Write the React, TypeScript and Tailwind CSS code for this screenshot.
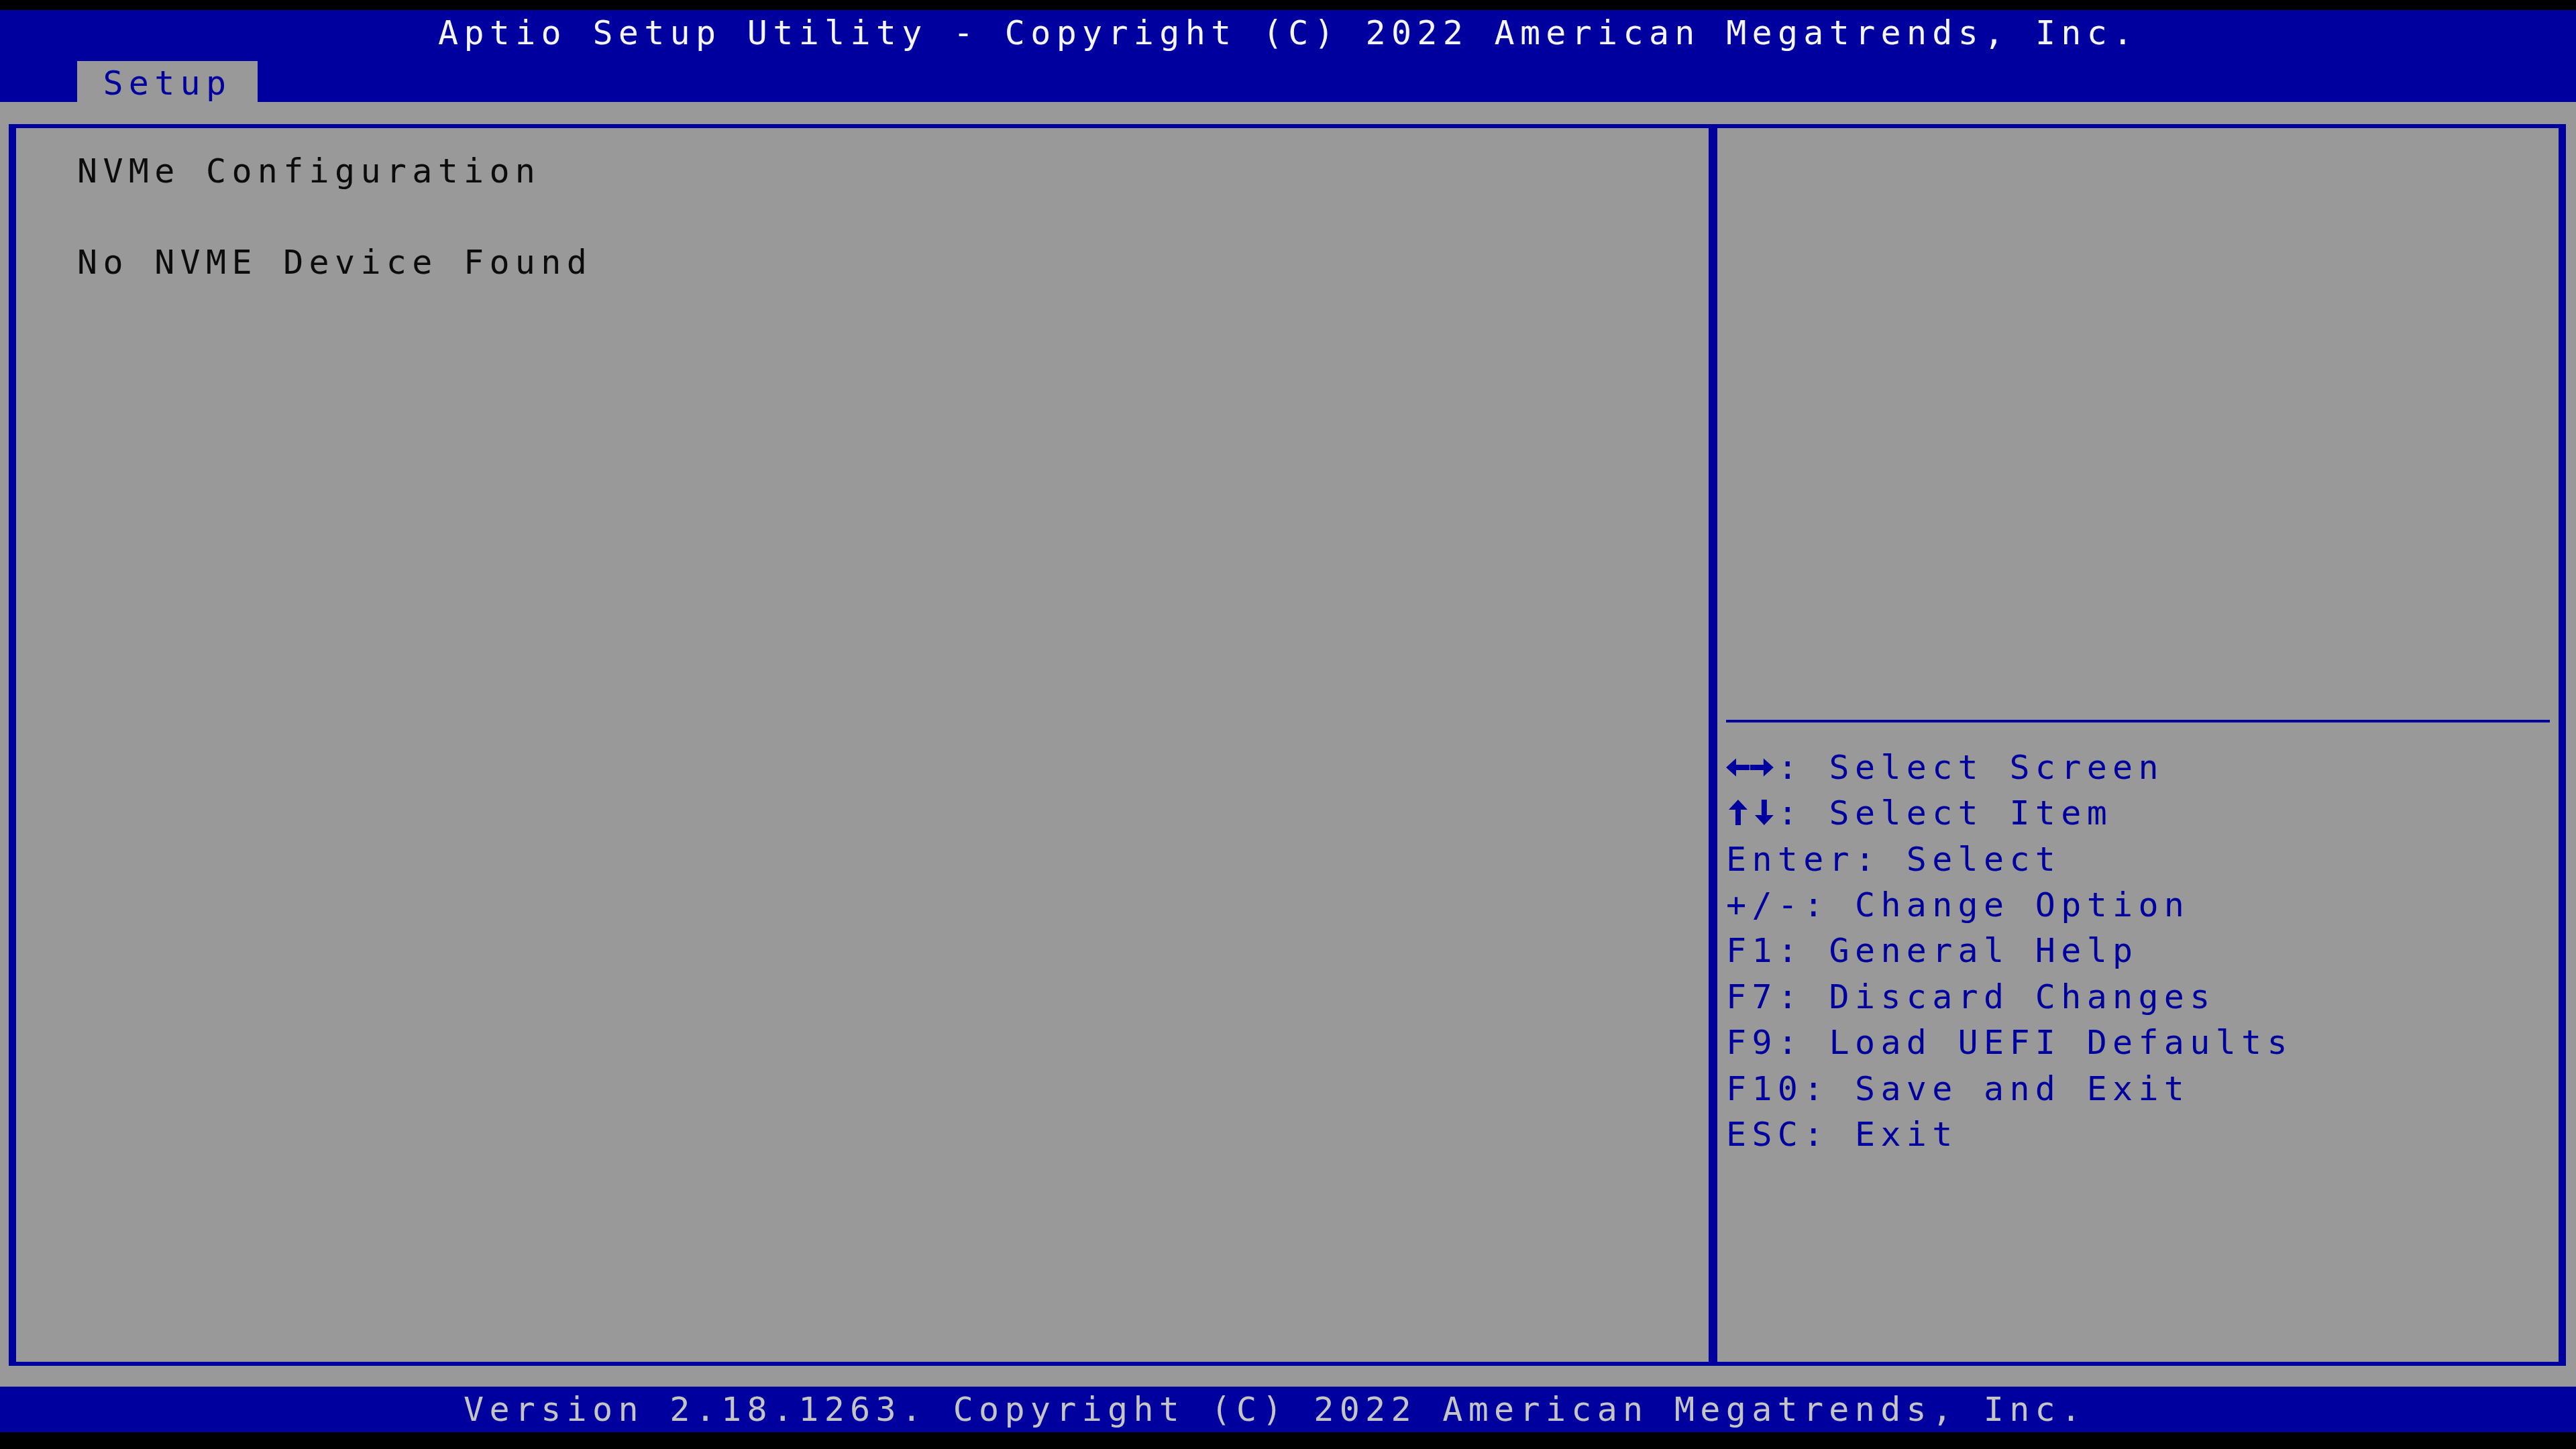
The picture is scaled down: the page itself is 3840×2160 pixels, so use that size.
import React from "react";

const ROW = "h-[68.4px] flex items-center whitespace-pre";

const helpLines = [
  "Enter: Select",
  "+/-: Change Option",
  "F1: General Help",
  "F7: Discard Changes",
  "F9: Load UEFI Defaults",
  "F10: Save and Exit",
  "ESC: Exit",
];

function LeftRightArrows() {
  return (
    <svg width="76.8" height="68" viewBox="0 0 77 68" className="shrink-0" fill="#00009e">
      <polygon points="0,34 15,20.5 15,30 35,30 35,38 15,38 15,47.5" />
      <polygon points="71,34 56,20.5 56,30 36,30 36,38 56,38 56,47.5" />
    </svg>
  );
}

function UpDownArrows() {
  return (
    <svg width="76.8" height="68" viewBox="0 0 77 68" className="shrink-0" fill="#00009e">
      <polygon points="18,14 4,29 14,29 14,52 22,52 22,29 32,29" />
      <polygon points="57,52 43,37 53,37 53,14 61,14 61,37 71,37" />
    </svg>
  );
}

export default function App() {
  return (
    <div className="w-[3840px] h-[2160px] bg-black flex flex-col overflow-hidden font-['DejaVu_Sans_Mono','Liberation_Mono',monospace] text-[50px] tracking-[8.3px] leading-none">
      <div className="h-[15px] shrink-0" />

      {/* title bar + tab strip */}
      <header className="h-[137.4px] shrink-0 bg-[#00009e] flex flex-col">
        <div className={`${ROW} pl-[653px] text-[#f4f4ff]`}>
          Aptio Setup Utility - Copyright (C) 2022 American Megatrends, Inc.
        </div>
        <div className="flex-1 flex items-end pl-[115px]">
          <div className="h-[61px] w-[269px] bg-[#999999] flex items-center pl-[38.4px] pt-[4px] text-[#00009e]">
            Setup
          </div>
        </div>
      </header>

      <main className="h-[1914.6px] shrink-0 bg-[#999999] pt-[33px] pl-[13px] pr-[15px] pb-[31px]">
        <div className="h-full flex border-x-[11px] border-y-[6px] border-[#00009e]">
          <section className="w-[2536px] shrink-0 border-r-[13px] border-[#00009e] pt-[29px] pl-[91px] text-[#0c0c0c]">
            <div className={ROW}>NVMe Configuration</div>
            <div className={ROW} />
            <div className={ROW}>No NVME Device Found</div>
          </section>

          <aside className="flex-1 pt-[29px] pl-[13px] pr-[13px] text-[#00009e]">
            <div className="h-[820.8px]" />
            <div className="h-[68.4px] flex items-center">
              <div className="h-[4px] w-full bg-[#00009e]" />
            </div>
            <div className={ROW}>
              <LeftRightArrows />
              <span>: Select Screen</span>
            </div>
            <div className={ROW}>
              <UpDownArrows />
              <span>: Select Item</span>
            </div>
            {helpLines.map((line) => (
              <div key={line} className={ROW}>
                {line}
              </div>
            ))}
          </aside>
        </div>
      </main>

      <footer className={`${ROW} shrink-0 bg-[#00009e] pl-[691px] text-[#c4c4c4]`}>
        Version 2.18.1263. Copyright (C) 2022 American Megatrends, Inc.
      </footer>
    </div>
  );
}
